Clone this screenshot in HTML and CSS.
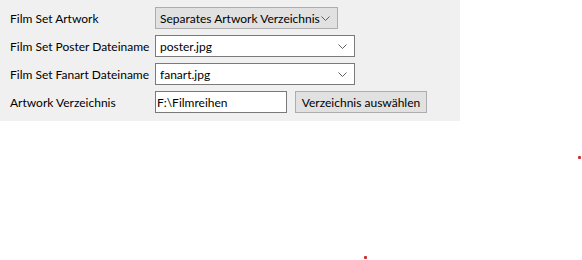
FILE: index.html
```html
<!DOCTYPE html>
<html lang="de">
<head>
    <meta charset="UTF-8">
    <title>Film Set Einstellungen</title>
    <link rel="stylesheet" href="styles.css">
</head>
<body>
    <div class="panel">
        <label class="label">Film Set Artwork</label>
        <div class="field">
            <div class="combo combo-button">
                <span class="combo-text">Separates Artwork Verzeichnis</span>
                <svg class="chevron" width="9" height="5" viewBox="0 0 9 5"><path d="M0.5 0.5 L4.5 4.5 L8.5 0.5" fill="none" stroke="#606060" stroke-width="1"/></svg>
            </div>
        </div>

        <label class="label">Film Set Poster Dateiname</label>
        <div class="field">
            <div class="combo combo-edit">
                <span class="combo-text">poster.jpg</span>
                <svg class="chevron" width="9" height="5" viewBox="0 0 9 5"><path d="M0.5 0.5 L4.5 4.5 L8.5 0.5" fill="none" stroke="#606060" stroke-width="1"/></svg>
            </div>
        </div>

        <label class="label">Film Set Fanart Dateiname</label>
        <div class="field">
            <div class="combo combo-edit">
                <span class="combo-text">fanart.jpg</span>
                <svg class="chevron" width="9" height="5" viewBox="0 0 9 5"><path d="M0.5 0.5 L4.5 4.5 L8.5 0.5" fill="none" stroke="#606060" stroke-width="1"/></svg>
            </div>
        </div>

        <label class="label">Artwork Verzeichnis</label>
        <div class="field field-row">
            <input type="text" class="text-input" value="F:\Filmreihen">
            <button class="btn">Verzeichnis auswählen</button>
        </div>
    </div>

    <span class="dot dot-right"></span>
    <span class="dot dot-bottom"></span>
</body>
</html>
```

FILE: styles.css
```css
body {
    margin: 0;
    background-color: #ffffff;
    font-family: Lato, "Noto Sans", sans-serif;
    font-size: 12px;
    color: #000000;
    width: 582px;
    height: 260px;
    position: relative;
    overflow: hidden;
}

.panel {
    width: 450px;
    height: 107px;
    padding: 7px 0 7px 10px;
    background-color: #f0f0f0;
    display: grid;
    grid-template-columns: 145px 1fr;
    grid-auto-rows: 22px;
    row-gap: 6px;
}

.label {
    display: flex;
    align-items: center;
    white-space: nowrap;
}

.field {
    display: flex;
    align-items: stretch;
}

.field-row {
    gap: 8px;
}

.combo {
    box-sizing: border-box;
    display: flex;
    align-items: center;
    justify-content: space-between;
    padding: 0 7px 0 4px;
}

.combo-button {
    width: 183px;
    background-color: #e1e1e1;
    border: 1px solid #adadad;
}

.combo-edit {
    width: 200px;
    background-color: #ffffff;
    border: 1px solid #7a7a7a;
}

.combo-text {
    white-space: nowrap;
}

.chevron {
    flex: none;
}

.text-input {
    box-sizing: border-box;
    width: 132px;
    margin: 0;
    padding: 0 1px;
    font: inherit;
    color: #000000;
    background-color: #ffffff;
    border: 1px solid #7a7a7a;
    outline: none;
}

.btn {
    box-sizing: border-box;
    width: 132px;
    margin: 0;
    padding: 0;
    font: inherit;
    color: #000000;
    background-color: #e1e1e1;
    border: 1px solid #adadad;
}

.dot {
    position: absolute;
    width: 3px;
    height: 3px;
    border-radius: 1px;
    background-color: #d42a2a;
}

.dot-right {
    left: 578px;
    top: 156px;
}

.dot-bottom {
    left: 364px;
    top: 256px;
}
```
